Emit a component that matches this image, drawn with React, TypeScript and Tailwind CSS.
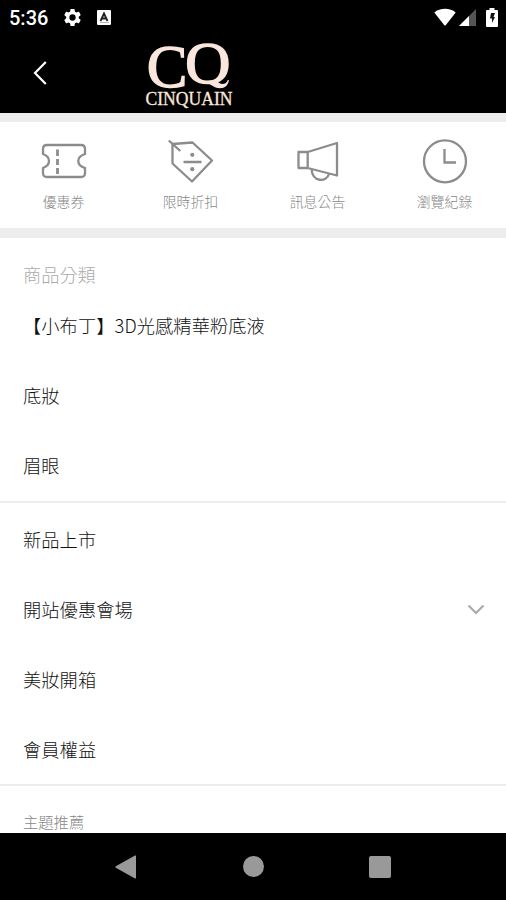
import React from "react";

type IconProps = { className?: string };

type Action = {
  label: string;
  icon: React.ReactNode;
};

type MenuItem = {
  label: string;
  expandable?: boolean;
};

function GearIcon({ className }: IconProps) {
  return (
    <svg viewBox="0 0 24 24" className={className} fill="currentColor">
      <path d="M19.14 12.94c.04-.3.06-.61.06-.94 0-.32-.02-.64-.07-.94l2.03-1.58a.49.49 0 0 0 .12-.61l-1.92-3.32a.49.49 0 0 0-.59-.22l-2.39.96c-.5-.38-1.03-.7-1.62-.94l-.36-2.54a.48.48 0 0 0-.48-.41h-3.84a.47.47 0 0 0-.47.41l-.36 2.54c-.59.24-1.13.57-1.62.94l-2.39-.96a.48.48 0 0 0-.59.22L2.74 8.87a.48.48 0 0 0 .12.61l2.03 1.58c-.05.3-.09.63-.09.94s.02.64.07.94l-2.03 1.58a.49.49 0 0 0-.12.61l1.92 3.32c.12.22.37.29.59.22l2.39-.96c.5.38 1.03.7 1.62.94l.36 2.54c.05.24.24.41.48.41h3.84c.24 0 .44-.17.47-.41l.36-2.54c.59-.24 1.13-.56 1.62-.94l2.39.96c.22.08.47 0 .59-.22l1.92-3.32a.48.48 0 0 0-.12-.61l-2.01-1.58zM12 15.6a3.6 3.6 0 1 1 0-7.2 3.6 3.6 0 0 1 0 7.2z" />
    </svg>
  );
}

function StatusBar() {
  return (
    <div className="flex h-9 items-center bg-black pl-[9px] pr-2 text-white">
      <span className="w-[53px] whitespace-nowrap font-[Roboto] text-[20px] font-medium leading-9">5:36</span>
      <GearIcon className="-mt-0.5 size-[21px]" />
      <svg viewBox="0 0 14 15" className="-mt-0.5 ml-[14px] h-[15px] w-[14px]">
        <rect width="14" height="15" rx="1" fill="#fff" />
        <path d="M3.5 11 7 3.5 10.5 11M5 8.5h4" fill="none" stroke="#222" strokeWidth="1.8" />
        <path d="M3 12.5h9" stroke="#bbb" strokeWidth="1" />
      </svg>

      <div className="-mt-0.5 ml-auto flex items-center">
        <svg viewBox="0 0 22 18" className="h-[18px] w-[22px]">
          <path d="M.3 4.5C6-.5 16-.5 21.700 4.500L11.700 17.200a1 1 0 0 1-1.400 0z" fill="#fff" />
        </svg>
        <svg viewBox="0 0 17 17" className="ml-[3px] mt-px h-[17px] w-[17px]">
          <path d="M17 0v17H0z" fill="#555" />
          <path d="M10 7v10H0z" fill="#fff" />
        </svg>
        <svg viewBox="0 0 12 19" className="ml-[10px] h-[19px] w-3">
          <path d="M3.500 0h5v2H11a1 1 0 0 1 1 1v15a1 1 0 0 1-1 1H1a1 1 0 0 1-1-1V3a1 1 0 0 1 1-1h2.500z" fill="#fff" />
          <path d="M5 5h4L7.500 9H9l-3 6v-4.500H4z" fill="#111" />
        </svg>
      </div>
    </div>
  );
}

function Logo() {
  return (
    <svg viewBox="0 0 90 70" className="h-[70px] w-[90px] overflow-visible" fill="#fbe6dc" fontFamily="'Liberation Serif', serif">
      <clipPath id="bowl">
        <path d="M40 0h50v43.700H40z" />
      </clipPath>
      <text transform="translate(2.800 46.300)" fontSize="61" stroke="#fbe6dc" strokeWidth="1.300">C</text>
      <g clipPath="url(#bowl)">
        <text transform="translate(41 42) scale(1.070 1)" fontSize="59" stroke="#fbe6dc" strokeWidth="1.300">Q</text>
      </g>
      {/* short swash that replaces the long serif tail */}
      <path d="M61 41.500c5 .5 8.500 5.800 15 5.800 5 0 8-3 9-8l-1.200-.4c-1.200 3-3 4-5.300 4-3.500 0-6-3-9.500-3.400z" />
      <text x="1.500" y="64.300" fontSize="18.800" textLength="87" lengthAdjust="spacingAndGlyphs" stroke="#fbe6dc" strokeWidth="0.300">
        CINQUAIN
      </text>
    </svg>
  );
}

function Header() {
  return (
    <header className="flex h-[77px] bg-black pl-[33px]">
      <svg viewBox="0 0 14 24" className="mt-[25px] h-6 w-[14px]" fill="none" stroke="#fff" strokeWidth="2.200">
        <path d="M12.800 1 2 12l10.800 11" />
      </svg>
      <div className="ml-[97px] mt-[5px]">
        <Logo />
      </div>
    </header>
  );
}

const iconClass = "h-[46px] w-[46px]";

const actions: Action[] = [
  {
    label: "優惠券",
    icon: (
      <svg viewBox="0 0 46 46" className={iconClass} fill="none" stroke="#8c8c8c" strokeWidth="2.300">
        <path d="M6 7h34q4 0 4 4v5c-9 3-9 11 0 14v5q0 4-4 4H6q-4 0-4-4v-5c8-3 8-11 0-14v-5q0-4 4-4z" />
        <path d="M16.500 11.500V18m0 3v6m0 3v6" strokeWidth="2.800" />
      </svg>
    ),
  },
  {
    label: "限時折扣",
    icon: (
      <svg viewBox="0 0 46 46" className={iconClass} fill="none" stroke="#8c8c8c" strokeWidth="2.300">
        <path d="M4.500 6 24.500 4.500 44 22.500 24 43.500 4.500 25.500z" strokeLinejoin="round" />
        <path d="m.8 2.500 11.500 10.500M15.500 24h18" />
        <circle cx="24.300" cy="16.800" r="2.100" fill="#8c8c8c" stroke="none" />
        <circle cx="24.300" cy="31.200" r="2.100" fill="#8c8c8c" stroke="none" />
      </svg>
    ),
  },
  {
    label: "訊息公告",
    icon: (
      <svg viewBox="0 0 46 46" className={iconClass} fill="none" stroke="#8c8c8c" strokeWidth="2.300" strokeLinejoin="round">
        <path d="M3.500 14h9.200v16H3.500zM12.700 14 42 5v32.500L12.700 30M16.500 31c1 13.500 15 13.500 17.500 5" />
      </svg>
    ),
  },
  {
    label: "瀏覽紀錄",
    icon: (
      <svg viewBox="0 0 46 46" className={iconClass} fill="none" stroke="#8c8c8c" strokeWidth="2.300">
        <circle cx="23" cy="23.300" r="21" />
        <path d="M22.500 11v13.500H34" />
      </svg>
    ),
  },
];

function ActionBar() {
  return (
    <nav className="grid h-[125px] grid-cols-[repeat(4,127px)] border-b-[10px] border-t-[9px] border-[#ededed] bg-white">
      {actions.map((a) => (
        <button key={a.label} className="flex flex-col items-center pt-4">
          {a.icon}
          <span className="mt-[7px] whitespace-nowrap text-[13.900px] font-light leading-5 text-[#888]">{a.label}</span>
        </button>
      ))}
    </nav>
  );
}

const categories: MenuItem[] = [
  { label: "【小布丁】3D光感精華粉底液" },
  { label: "底妝" },
  { label: "眉眼" },
];

const pages: MenuItem[] = [
  { label: "新品上市" },
  { label: "開站優惠會場", expandable: true },
  { label: "美妝開箱" },
  { label: "會員權益" },
];

function MenuList({ items }: { items: MenuItem[] }) {
  return (
    <ul>
      {items.map((item) => (
        <li key={item.label} className="flex h-[70.300px] items-center justify-between pl-[23px] pr-[21px] text-[18.200px] font-light tracking-[0.120px] text-[#111]">
          {item.label}
          {item.expandable && (
            <svg viewBox="0 0 18 11" className="h-[11px] w-[18px]" fill="none" stroke="#aaa" strokeWidth="2.200">
              <path d="m1.500 1.500 7.500 7.500 7.500-7.500" />
            </svg>
          )}
        </li>
      ))}
    </ul>
  );
}

function SystemNav() {
  return (
    <div className="flex h-[67px] shrink-0 items-center bg-black pl-[115px] text-[#999]">
      <svg viewBox="0 0 21 24" className="h-6 w-[21px]" fill="currentColor">
        <path d="M20 .5a.7.7 0 0 1 1 .7v21.600a.7.7 0 0 1-1 .7L.8 12.700a.8.8 0 0 1 0-1.400z" />
      </svg>
      <div className="ml-[107px] size-[21px] rounded-full bg-[#999]" />
      <div className="ml-[105px] size-[22px] rounded-[2px] bg-[#999]" />
    </div>
  );
}

export default function App() {
  return (
    <div className="flex h-[900px] w-[506px] flex-col overflow-hidden bg-white font-['Noto_Sans_CJK_TC',sans-serif]">
      <StatusBar />
      <Header />
      <ActionBar />
      <main className="min-h-0 flex-1 overflow-hidden">
        <section className="h-[265px] border-b-2 border-[#ededed]">
          <h2 className="pb-px pl-[23px] pt-[21px] text-[18.200px] font-light leading-[30px] text-[#aaa]">商品分類</h2>
          <MenuList items={categories} />
        </section>
        <section className="h-[283px] border-b-2 border-[#ededed] pt-px">
          <MenuList items={pages} />
        </section>
        <h2 className="pl-[23px] pt-[23px] text-[15.300px] font-light leading-6 text-[#888]">主題推薦</h2>
      </main>
      <SystemNav />
    </div>
  );
}
